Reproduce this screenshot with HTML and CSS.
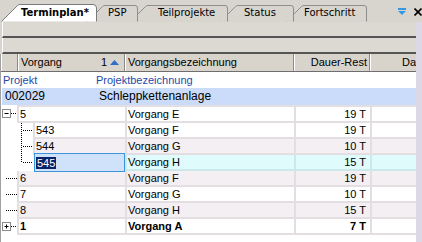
FILE: index.html
```html
<!DOCTYPE html>
<html>
<head>
<meta charset="utf-8">
<title>Terminplan</title>
<link rel="stylesheet" href="styles.css">
</head>
<body>
<div class="app">
  <div class="tabbar">
    <svg class="tabshapes" width="422" height="22" viewBox="0 0 422 22">
      <path class="tab-in" d="M286.5,21.5 L301.5,6.5 Q302.5,5.5 304,5.5 L364,5.5 Q366.5,5.5 366.5,8 L366.5,21.5"/>
      <path class="tab-in" d="M220.5,21.5 L235.5,6.5 Q236.5,5.5 238,5.5 L291,5.5 Q293.5,5.5 293.5,8 L293.5,21.5"/>
      <path class="tab-in" d="M130.5,21.5 L145.5,6.5 Q146.5,5.5 148,5.5 L225,5.5 Q227.5,5.5 227.5,8 L227.5,21.5"/>
      <path class="tab-in" d="M87.5,21.5 L102.5,6.5 Q103.5,5.5 105,5.5 L135,5.5 Q137.5,5.5 137.5,8 L137.5,21.5"/>
      <path class="tab-act" d="M1.5,21.5 L17.5,5.5 Q18.5,4.5 20,4.5 L93,4.5 Q96.5,4.5 96.5,8 L96.5,21.5"/>
    </svg>
    <div class="tab t1">Terminplan*</div>
    <div class="tab t2">PSP</div>
    <div class="tab t3">Teilprojekte</div>
    <div class="tab t4">Status</div>
    <div class="tab t5">Fortschritt</div>
    <div class="tools">
      <svg width="8" height="8" viewBox="0 0 8 8"><rect x="0" y="0" width="8" height="2" fill="#3399e6"/><path d="M0,3 L8,3 L4,7 Z" fill="#3399e6"/></svg>
      <svg width="8" height="8" viewBox="0 0 8 8"><path d="M0.5,0.5 L7.5,7.5 M7.5,0.5 L0.5,7.5" stroke="#000" stroke-width="1.6"/></svg>
    </div>
  </div>
  <div class="main">
    <div class="content">
      <div class="band"></div>
      <div class="band"></div>
      <div class="grid">
        <div class="hdr">
          <div class="hc h0"></div>
          <div class="hc h1"><span>Vorgang</span><span class="sort">1 <svg width="9" height="5" viewBox="0 0 9 5"><path d="M0,5 L4.5,0 L9,5 Z" fill="#2f6fc8"/></svg></span></div>
          <div class="hc h2">Vorgangsbezeichnung</div>
          <div class="hc h3">Dauer-Rest</div>
          <div class="hc h4">Dauer</div>
        </div>
        <div class="prow">
          <div class="p1">Projekt</div>
          <div class="p2">Projektbezeichnung</div>
        </div>
        <div class="grow">
          <div class="g1">002029</div>
          <div class="g2">Schleppkettenanlage</div>
        </div>
        <div class="rows">
          <div class="row first">
            <svg class="tree t16" width="16" height="18" viewBox="0 0 16 18"><rect x="1.5" y="4.5" width="8" height="8" fill="#fff" stroke="#8a8a8a"/><path d="M3.5,8.5 h4" stroke="#000"/><path d="M10,8.5 h6" stroke="#000" stroke-dasharray="1 1"/></svg>
            <div class="c c1 top">5</div><div class="c c2">Vorgang E</div><div class="c c3">19 T</div><div class="c c4"></div>
          </div>
          <div class="row">
            <svg class="tree t32" width="32" height="16" viewBox="0 0 32 16"><path d="M20.5,0 v16 M22,7.5 h10" stroke="#000" stroke-dasharray="1 1"/></svg>
            <div class="c c1 child">543</div><div class="c c2">Vorgang F</div><div class="c c3">19 T</div><div class="c c4"></div>
          </div>
          <div class="row alt">
            <svg class="tree t32" width="32" height="16" viewBox="0 0 32 16"><path d="M20.5,0 v16 M22,7.5 h10" stroke="#000" stroke-dasharray="1 1"/></svg>
            <div class="c c1 child">544</div><div class="c c2">Vorgang G</div><div class="c c3">10 T</div><div class="c c4"></div>
          </div>
          <div class="row sel">
            <svg class="tree t32" width="32" height="16" viewBox="0 0 32 16"><path d="M20.5,0 v8 M22,7.5 h10" stroke="#000" stroke-dasharray="1 1"/></svg>
            <div class="c c1 child edit"><span class="selt">545</span></div><div class="c c2">Vorgang H</div><div class="c c3">15 T</div><div class="c c4"></div>
          </div>
          <div class="row alt">
            <svg class="tree t16" width="16" height="16" viewBox="0 0 16 16"><path d="M5,7.5 h11" stroke="#000" stroke-dasharray="1 1"/></svg>
            <div class="c c1 top">6</div><div class="c c2">Vorgang F</div><div class="c c3">19 T</div><div class="c c4"></div>
          </div>
          <div class="row">
            <svg class="tree t16" width="16" height="16" viewBox="0 0 16 16"><path d="M5,7.5 h11" stroke="#000" stroke-dasharray="1 1"/></svg>
            <div class="c c1 top">7</div><div class="c c2">Vorgang G</div><div class="c c3">10 T</div><div class="c c4"></div>
          </div>
          <div class="row alt">
            <svg class="tree t16" width="16" height="16" viewBox="0 0 16 16"><path d="M5,7.5 h11" stroke="#000" stroke-dasharray="1 1"/></svg>
            <div class="c c1 top">8</div><div class="c c2">Vorgang H</div><div class="c c3">15 T</div><div class="c c4"></div>
          </div>
          <div class="row bold">
            <svg class="tree t16" width="16" height="16" viewBox="0 0 16 16"><rect x="1.5" y="3.5" width="8" height="8" fill="#fff" stroke="#8a8a8a"/><path d="M3.5,7.5 h4 M5.5,5.5 v4" stroke="#000"/><path d="M10,7.5 h6" stroke="#000" stroke-dasharray="1 1"/></svg>
            <div class="c c1 top">1</div><div class="c c2">Vorgang A</div><div class="c c3">7 T</div><div class="c c4"></div>
          </div>
        </div>
      </div>
    </div>
    <div class="vstrip"></div>
  </div>
</div>
</body>
</html>
```

FILE: styles.css
```css
* { box-sizing: border-box; margin: 0; padding: 0; }

body {
  width: 422px;
  height: 242px;
  overflow: hidden;
  background: #d8d4ce;
  font-family: "Liberation Sans", Arial, sans-serif;
  font-size: 11px;
  color: #000;
}

.app { display: flex; flex-direction: column; height: 242px; }

/* tab strip */
.tabbar {
  position: relative;
  height: 22px;
  display: flex;
  align-items: flex-start;
  font-family: "DejaVu Sans", sans-serif;
  font-size: 10px;
  white-space: nowrap;
}
.tabshapes { position: absolute; left: 0; top: 0; }
.tab-in { fill: #d8d4ce; stroke: #8e8e8e; }
.tab-act { fill: #fff; stroke: #7a7a7a; }
.tab { position: relative; height: 22px; padding-top: 7px; line-height: 12px; }
.t1 { width: 97px; padding-left: 21px; font-weight: bold; }
.t2 { width: 41px; padding-left: 11px; }
.t3 { width: 90px; padding-left: 20px; }
.t4 { width: 66px; padding-left: 16px; }
.t5 { width: 73px; padding-left: 10px; }
.tools { position: relative; display: flex; gap: 8px; margin-left: 31px; padding-top: 8px; }

/* main */
.main { flex: 1; display: flex; min-height: 0; }
.content { width: 416px; display: flex; flex-direction: column; overflow: hidden; }
.vstrip { flex: 1; background: #dcd8e6; }

.band {
  flex: none;
  height: 16px;
  margin-left: 2px;
  border-left: 1px solid #fff;
  border-bottom: 2px solid #555;
  background: #dcd8d2;
}

.grid { flex: 1; background: #fff; border-left: 1px solid #a0a0a0; overflow: hidden; }

.hdr {
  display: flex;
  height: 18px;
  border-bottom: 1px solid #6e6e6e;
  background: #d8d4cc;
  white-space: nowrap;
}
.hc {
  flex: none;
  height: 17px;
  line-height: 17px;
  border-right: 1px solid #8a8a8a;
  box-shadow: inset 1px 0 0 #fff;
  padding: 0 3px;
  overflow: hidden;
}
.h0 { width: 17px; }
.h1 { width: 107px; display: flex; justify-content: space-between; padding-right: 5px; }
.sort { display: flex; align-items: center; gap: 3px; }
.sort svg { margin-top: -1px; }
.h2 { width: 169px; }
.h3 { width: 76px; text-align: right; padding-right: 2px; }
.h4 { width: 65px; text-align: right; padding-right: 2px; }

.prow { display: flex; height: 16px; line-height: 16px; color: #1d4aa8; }
.p1 { width: 95px; padding-left: 2px; }

.grow { display: flex; height: 17px; line-height: 17px; background: #cadcfa; font-size: 12px; margin-left: 1px; }
.g1 { width: 97px; padding-left: 3px; }

/* data rows */
.row { display: flex; height: 16px; white-space: nowrap; }
.row.first { height: 18px; }
.tree { flex: none; display: block; }
.c {
  flex: none;
  height: 16px;
  line-height: 14px;
  border-left: 2px solid #e2dee2;
  border-bottom: 2px solid #e2dee2;
  padding-left: 1px;
  overflow: hidden;
}
.row.first .c { height: 18px; border-top: 2px solid #e2dee2; }
.c1.top { width: 108px; }
.c1.child { width: 92px; }
.c2 { width: 169px; }
.c3 { width: 76px; text-align: right; padding-right: 4px; }
.c4 { flex: 1; }

.row.alt .c { background: #f3eff3; }
.row.sel .c { background: #e0fbfb; border-color: #cde8ea; }
.row.sel .c1.edit {
  position: relative;
  z-index: 1;
  width: 91px;
  height: 19px;
  margin-left: 1px;
  margin-top: -2px;
  border: 1px solid #3c94dc;
  background: #cfe2fa;
  padding-left: 1px;
  padding-top: 2px;
}
.selt { background: #0a246a; color: #fff; padding: 0 1px; }
.row.bold { font-weight: bold; }
```
